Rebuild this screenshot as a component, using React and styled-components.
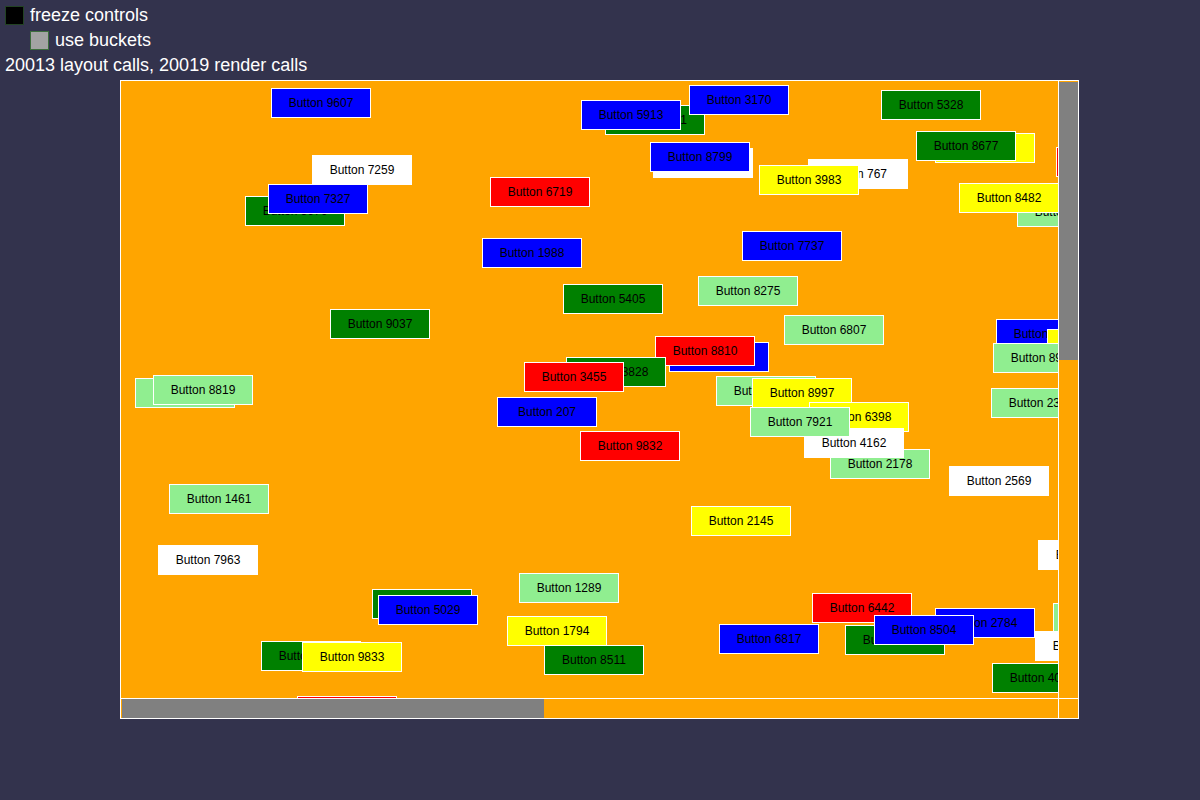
import React from "react";
import styled, { createGlobalStyle } from "styled-components";

const GlobalStyle = createGlobalStyle`
  html, body {
    margin: 0;
    padding: 0;
    background: #33334d;
  }
  body {
    font-family: "Liberation Sans", Arial, sans-serif;
    color: #fff;
  }
`;

// canvas buttons, in paint order (later ones on top); x/y are page coords
const buttons = [
  { label: "Button 4611", color: "green", x: 605, y: 105 },
  { label: "Button 9607", color: "blue", x: 271, y: 88 },
  { label: "Button 5913", color: "blue", x: 581, y: 100 },
  { label: "Button 3170", color: "blue", x: 689, y: 85 },
  { label: "Button 5328", color: "green", x: 881, y: 90 },
  { label: "Button 113", color: "yellow", x: 935, y: 133 },
  { label: "Button 8677", color: "green", x: 916, y: 131 },
  { label: "Button 1510", color: "red", x: 1056, y: 147 },
  { label: "Button 7259", color: "white", x: 312, y: 155 },
  { label: "Button 5676", color: "green", x: 245, y: 196 },
  { label: "Button 7327", color: "blue", x: 268, y: 184 },
  { label: "Button 6719", color: "red", x: 490, y: 177 },
  { label: "Button 2290", color: "white", x: 653, y: 148 },
  { label: "Button 8799", color: "blue", x: 650, y: 142 },
  { label: "Button 767", color: "white", x: 808, y: 159 },
  { label: "Button 3983", color: "yellow", x: 759, y: 165 },
  { label: "Button 4021", color: "lightgreen", x: 1017, y: 197 },
  { label: "Button 8482", color: "yellow", x: 959, y: 183 },
  { label: "Button 7737", color: "blue", x: 742, y: 231 },
  { label: "Button 1988", color: "blue", x: 482, y: 238 },
  { label: "Button 5405", color: "green", x: 563, y: 284 },
  { label: "Button 8275", color: "lightgreen", x: 698, y: 276 },
  { label: "Button 9037", color: "green", x: 330, y: 309 },
  { label: "Button 6807", color: "lightgreen", x: 784, y: 315 },
  { label: "Button 7104", color: "blue", x: 996, y: 319 },
  { label: "Button 5561", color: "yellow", x: 1047, y: 329 },
  { label: "Button 8930", color: "lightgreen", x: 993, y: 343 },
  { label: "Button 3325", color: "blue", x: 669, y: 342 },
  { label: "Button 8810", color: "red", x: 655, y: 336 },
  { label: "Button 3828", color: "green", x: 566, y: 357 },
  { label: "Button 3455", color: "red", x: 524, y: 362 },
  { label: "Button 6082", color: "lightgreen", x: 135, y: 378 },
  { label: "Button 8819", color: "lightgreen", x: 153, y: 375 },
  { label: "Button 2391", color: "lightgreen", x: 991, y: 388 },
  { label: "Button 207", color: "blue", x: 497, y: 397 },
  { label: "Button 1457", color: "lightgreen", x: 716, y: 376 },
  { label: "Button 8997", color: "yellow", x: 752, y: 378 },
  { label: "Button 6398", color: "yellow", x: 809, y: 402 },
  { label: "Button 2178", color: "lightgreen", x: 830, y: 449 },
  { label: "Button 4162", color: "white", x: 804, y: 428 },
  { label: "Button 7921", color: "lightgreen", x: 750, y: 407 },
  { label: "Button 9832", color: "red", x: 580, y: 431 },
  { label: "Button 2569", color: "white", x: 949, y: 466 },
  { label: "Button 1461", color: "lightgreen", x: 169, y: 484 },
  { label: "Button 2145", color: "yellow", x: 691, y: 506 },
  { label: "Button 6653", color: "white", x: 1038, y: 540 },
  { label: "Button 7963", color: "white", x: 158, y: 545 },
  { label: "Button 1289", color: "lightgreen", x: 519, y: 573 },
  { label: "Button 3307", color: "green", x: 372, y: 589 },
  { label: "Button 5029", color: "blue", x: 378, y: 595 },
  { label: "Button 1794", color: "yellow", x: 507, y: 616 },
  { label: "Button 8511", color: "green", x: 544, y: 645 },
  { label: "Button 4470", color: "green", x: 261, y: 641 },
  { label: "Button 9833", color: "yellow", x: 302, y: 642 },
  { label: "Button 7190", color: "red", x: 297, y: 696 },
  { label: "Button 6817", color: "blue", x: 719, y: 624 },
  { label: "Button 6442", color: "red", x: 812, y: 593 },
  { label: "Button 1036", color: "green", x: 845, y: 625 },
  { label: "Button 2784", color: "blue", x: 935, y: 608 },
  { label: "Button 8504", color: "blue", x: 874, y: 615 },
  { label: "Button 6218", color: "lightgreen", x: 1053, y: 603 },
  { label: "Button 9146", color: "white", x: 1035, y: 631 },
  { label: "Button 4033", color: "green", x: 992, y: 663 },
];

// page coords of the viewport's top-left corner
const ORIGIN_X = 121;
const ORIGIN_Y = 81;

const App = () => {
  return (
    <Page>
      <GlobalStyle />
      <Controls>
        <Row>
          <Check $fill="#000" $edge="#234323" />
          <span>freeze controls</span>
        </Row>
        <Row $indent>
          <Check $fill="#a3a3a3" $edge="#3d6e3d" />
          <span>use buckets</span>
        </Row>
        <Row>20013 layout calls, 20019 render calls</Row>
      </Controls>
      <Frame>
        <Viewport>
          {buttons.map((b) => (
            <CanvasButton
              key={b.label}
              $color={b.color}
              $x={b.x - ORIGIN_X}
              $y={b.y - ORIGIN_Y}
            >
              {b.label}
            </CanvasButton>
          ))}
        </Viewport>
        <VScroll>
          <VThumb />
        </VScroll>
        <HScroll>
          <HThumb />
        </HScroll>
        <Corner />
      </Frame>
    </Page>
  );
};

const Page = styled.div`
  padding: 3px 5px 0;
  min-height: 797px;
`;

const Controls = styled.div`
  display: flex;
  flex-direction: column;
  font-size: 18px;
`;

const Row = styled.div`
  display: flex;
  align-items: center;
  gap: 6px;
  height: 25px;
  padding-left: ${(p) => (p.$indent ? "25px" : "0")};
  white-space: nowrap;
`;

const Check = styled.span`
  box-sizing: border-box;
  width: 19px;
  height: 19px;
  background: ${(p) => p.$fill};
  border: 1px solid ${(p) => p.$edge};
  flex-shrink: 0;
`;

const Frame = styled.div`
  box-sizing: border-box;
  margin: 2px 0 0 115px;
  width: 959px;
  height: 639px;
  border: 1px solid #fff;
  background: #ffa500;
  display: grid;
  grid-template-columns: 1fr 20px;
  grid-template-rows: 1fr 20px;
`;

const Viewport = styled.div`
  position: relative;
  overflow: hidden;
`;

const CanvasButton = styled.div.attrs((p) => ({
  style: { left: `${p.$x}px`, top: `${p.$y}px` },
}))`
  position: absolute;
  box-sizing: border-box;
  width: 100px;
  height: 30px;
  border: 1px solid #fff;
  background: ${(p) => p.$color};
  color: #000;
  font-size: 12px;
  display: flex;
  align-items: center;
  justify-content: center;
  white-space: nowrap;
`;

const VScroll = styled.div`
  border-left: 1px solid #fff;
  padding-top: 1px;
`;

const VThumb = styled.div`
  height: 278px;
  background: #808080;
`;

const HScroll = styled.div`
  border-top: 1px solid #fff;
  padding-left: 1px;
`;

const HThumb = styled.div`
  width: 422px;
  height: 100%;
  background: #808080;
`;

const Corner = styled.div`
  border-left: 1px solid #fff;
  border-top: 1px solid #fff;
`;

export default App;
